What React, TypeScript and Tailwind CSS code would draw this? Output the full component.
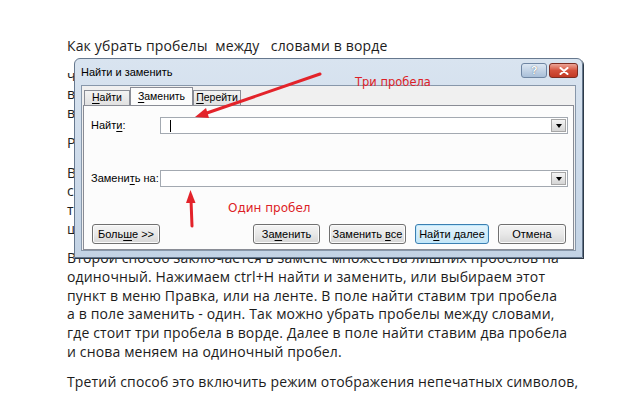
import React from "react";

// article paragraphs, line breaks as in the screenshot
const paragraphs: string[][] = [
  ["Как убрать пробелы  между   словами в ворде"],
  [
    "чтобы убрать лишние пробелы в тексте, можно воспользоваться",
    "встроенными средствами текстового редактора. Разберем",
    "все варианты по порядку.",
  ],
  ["Рассмотрим несколько способов."],
  [
    "В первом способе нужно выделить текст и поменять выравнивание",
    "с ширины на левый край, так как при выравнивании по ширине",
    "текст растягивается и между словами появляются большие",
    "щели, которые выглядят как лишние пробелы.",
  ],
  [
    "Второй способ заключается в замене множества лишних пробелов на",
    "одиночный. Нажимаем ctrl+H найти и заменить, или выбираем этот",
    "пункт в меню Правка, или на ленте. В поле найти ставим три пробела",
    "а в поле заменить - один. Так можно убрать пробелы между словами,",
    "где стоит три пробела в ворде. Далее в поле найти ставим два пробела",
    "и снова меняем на одиночный пробел.",
  ],
  ["Третий способ это включить режим отображения непечатных символов,"],
];

function U({ children }: { children: React.ReactNode }) {
  return <span className="underline decoration-1 underline-offset-[2px]">{children}</span>;
}

function Tab({
  children,
  w,
  active = false,
}: {
  children: React.ReactNode;
  w: string;
  active?: boolean;
}) {
  if (active) {
    return (
      <div className={`relative z-10 -mb-[1px] flex h-[18px] ${w} items-center justify-center border border-b-0 border-[#898c95] bg-[#fcfcfc] text-[10.5px]`}>
        <span>{children}</span>
      </div>
    );
  }
  return (
    <div className={`mt-[3px] flex h-[15px] ${w} items-center justify-center border border-b-0 border-[#898c95] bg-gradient-to-b from-[#f3f3f3] to-[#e1e1e1] text-[10.5px]`}>
      <span>{children}</span>
    </div>
  );
}

function Field() {
  return (
    <div className="relative h-[17px] flex-1 border border-[#a3a9b1] bg-white">
      <div className="absolute inset-y-[1px] right-[1px] flex w-[15px] items-center justify-center border border-[#a6a6a6] bg-gradient-to-b from-[#f4f4f4] to-[#d5d5d5]">
        <div className="h-0 w-0 border-x-[3px] border-t-[4px] border-x-transparent border-t-black" />
      </div>
    </div>
  );
}

function Btn({
  children,
  w,
  focused = false,
}: {
  children: React.ReactNode;
  w: string;
  focused?: boolean;
}) {
  return (
    <div
      className={
        focused
          ? `flex h-[20px] ${w} items-center justify-center rounded-[3px] border border-[#3c7fb1] bg-gradient-to-b from-[#e5f4fc] to-[#c4e5f6] shadow-[inset_0_0_0_1px_#bfe9fd]`
          : `flex h-[20px] ${w} items-center justify-center rounded-[3px] border border-[#707070] bg-gradient-to-b from-[#f4f4f4] via-[#e8e8e8] to-[#d6d6d6] shadow-[inset_0_0_0_1px_#fbfbfb]`
      }
    >
      <span className="whitespace-pre">{children}</span>
    </div>
  );
}

function FindReplaceDialog() {
  return (
    <div className="absolute left-[74px] top-[58px] flex h-[200px] w-[509px] flex-col rounded-t-[6px] border border-[#66788e] bg-gradient-to-b from-[#d9e4f0] to-[#c3d3e5] font-['Liberation_Sans',sans-serif] text-[11px] text-black shadow-[1px_1px_0_#2d3a48]">
      {/* title bar */}
      <div className="flex h-[26px] shrink-0 items-start pl-[6px] pr-[4px]">
        <span className="mt-[5px]">Найти и заменить</span>
        <div className="ml-auto mt-[4px] flex gap-[2px]">
          <div className="flex h-[15px] w-[26px] items-center justify-center rounded-[3px] border border-[#6f86a3] bg-gradient-to-b from-[#dce7f3] to-[#a9bfd8] text-[11px] font-bold leading-none text-white [text-shadow:0_0_1px_#33475f]">
            ?
          </div>
          <div className="flex h-[15px] w-[29px] items-center justify-center rounded-[3px] border border-[#7b2c22] bg-gradient-to-b from-[#eba497] via-[#d4503b] to-[#c23a25]">
            <svg width="10" height="8" viewBox="0 0 10 8">
              <path d="M1.5 1 L8.5 7 M8.5 1 L1.5 7" stroke="#ffffff" strokeWidth="2" strokeLinecap="round" />
            </svg>
          </div>
        </div>
      </div>

      {/* client area */}
      <div className="mx-[6px] mb-[6px] flex flex-1 flex-col border border-[#8797aa] bg-[#f0f0f0] px-[1px] pt-[1px]">
        <div className="flex pl-[1px]">
          <Tab w="w-[46px]">
            <U>Н</U>айти
          </Tab>
          <Tab w="w-[63px]" active>
            <U>З</U>аменить
          </Tab>
          <Tab w="w-[48px]">
            <U>П</U>ерейти
          </Tab>
        </div>
        <div className="flex flex-1 flex-col border border-[#898c95] bg-[#fcfcfc] pl-[7px] pr-[5px] pt-[11px]">
          <div className="flex items-center">
            <span className="w-[69px]">
              Найт<U>и</U>:
            </span>
            <div className="relative flex flex-1">
              <Field />
              <div className="absolute left-[10px] top-[3px] h-[12px] w-[1px] bg-black" />
            </div>
          </div>
          <div className="mt-[36px] flex items-center">
            <span className="w-[69px]">
              Замени<U>т</U>ь на:
            </span>
            <Field />
          </div>
          <div className="mt-[37px] flex items-center pl-[1px] pr-[2px]">
            <Btn w="w-[68px]">
              Боль<U>ш</U>е &gt;&gt;
            </Btn>
            <div className="ml-auto flex gap-[9px]">
              <Btn w="w-[67px]">
                За<U>м</U>енить
              </Btn>
              <Btn w="w-[77px]">
                Заменить <U>в</U>се
              </Btn>
              <Btn w="w-[74px]" focused>
                На<U>й</U>ти далее
              </Btn>
              <Btn w="w-[68px]">Отмена</Btn>
            </div>
          </div>
        </div>
      </div>
    </div>
  );
}

export default function App() {
  return (
    <div className="relative h-[393px] w-[640px] overflow-hidden bg-white">
      {/* article text */}
      <div className="flex flex-col gap-[11px] pl-[67px] pt-[37px] font-['Open_Sans',sans-serif] text-[14px] leading-[18.7px] tracking-[0.15px] text-[#1c1c1c]">
        {paragraphs.map((lines, i) => (
          <div key={i}>
            {lines.map((line, j) => (
              <div key={j} className="whitespace-pre">
                {line}
              </div>
            ))}
          </div>
        ))}
      </div>

      <FindReplaceDialog />

      {/* red annotations */}
      <svg className="pointer-events-none absolute left-0 top-0" width="640" height="393" viewBox="0 0 640 393">
        <path d="M320 74 L204 114" stroke="#e3232a" strokeWidth="3" strokeLinecap="round" />
        <path d="M195 117 L206 108 L209 118 Z" fill="#e3232a" />
        <path d="M192 226 L191 200" stroke="#e3232a" strokeWidth="3" strokeLinecap="round" />
        <path d="M190.5 190 L186 203 L195.5 203 Z" fill="#e3232a" />
      </svg>
      <div className="absolute left-[355px] top-[75px] font-['DejaVu_Sans',sans-serif] text-[11.5px] leading-[14px] text-[#dd1f27]">
        Три пробела
      </div>
      <div className="absolute left-[228px] top-[201px] font-['DejaVu_Sans',sans-serif] text-[12px] leading-[14px] text-[#dd1f27]">
        Один пробел
      </div>
    </div>
  );
}
